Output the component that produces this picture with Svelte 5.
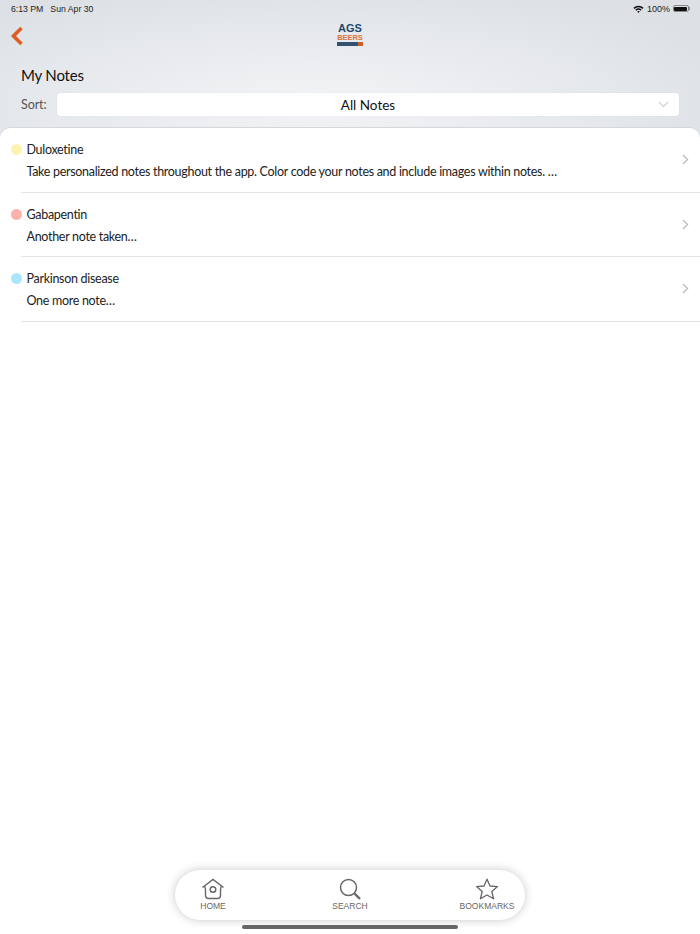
<script>
  const notes = [
    { title: 'Duloxetine', body: 'Take personalized notes throughout the app. Color code your notes and include images within notes. …', color: '#fdf3b0' },
    { title: 'Gabapentin', body: 'Another note taken…', color: '#fdb3ac' },
    { title: 'Parkinson disease', body: 'One more note…', color: '#a9e6fb' }
  ];
</script>

<div class="page">
  <header class="header">
    <div class="status">
      <span><span class="time">6:13 PM</span>Sun Apr 30</span>
      <span class="status-right">
        <svg width="11" height="8" viewBox="0 0 11 8"><path d="M0.4 2.8 A7.4 7.4 0 0 1 10.6 2.8 L9.5 3.9 A5.8 5.8 0 0 0 1.5 3.9 Z M2.3 4.7 A4.7 4.7 0 0 1 8.7 4.7 L7.6 5.8 A3.1 3.1 0 0 0 3.4 5.8 Z M4.2 6.6 A1.9 1.9 0 0 1 6.8 6.6 L5.5 8 Z" fill="#111"/></svg>
        <span>100%</span>
        <span class="battery"><span class="battery-fill"></span></span>
        <span class="battery-nub"></span>
      </span>
    </div>
    <div class="nav">
      <svg class="back" width="14" height="20" viewBox="0 0 14 20"><path d="M11.5 2 L3.5 10 L11.5 18" fill="none" stroke="#dd5f24" stroke-width="3.6"/></svg>
      <div class="logo">
        <span class="logo-ags">AGS</span>
        <span class="logo-beers">BEERS</span>
        <span class="logo-bar"><span class="logo-bar-end"></span></span>
      </div>
    </div>
    <h1>My Notes</h1>
    <div class="sort">
      <span class="sort-label">Sort:</span>
      <div class="select">
        <span>All Notes</span>
        <svg class="caret" width="11" height="7" viewBox="0 0 11 7"><path d="M1 1 L5.5 5.5 L10 1" fill="none" stroke="#cfd2d6" stroke-width="1.3"/></svg>
      </div>
    </div>
  </header>

  <main class="list">
    {#each notes as note}
      <div class="row">
        <div class="row-text">
          <div class="title"><span class="dot" style="background: {note.color}"></span>{note.title}</div>
          <div class="body">{note.body}</div>
        </div>
        <svg class="chevron" width="7" height="11" viewBox="0 0 7 11"><path d="M1 1 L5.5 5.5 L1 10" fill="none" stroke="#bcbcbc" stroke-width="1.4"/></svg>
      </div>
    {/each}
  </main>

  <nav class="tabs">
    <div class="tab">
      <svg width="24" height="22" viewBox="0 0 24 22" fill="none" stroke="#666" stroke-width="1.4"><path d="M1.5 9.5 L12 1.5 L22.5 9.5"/><path d="M3.5 8 Q4.5 10 4.5 12 V17.5 Q4.5 20.5 7.5 20.5 H16.5 Q19.5 20.5 19.5 17.5 V12 Q19.5 10 20.5 8"/><circle cx="12" cy="11.5" r="2.8"/></svg>
      <span>HOME</span>
    </div>
    <div class="tab">
      <svg width="24" height="22" viewBox="0 0 24 22" fill="none" stroke="#666"><circle cx="10.5" cy="9.5" r="8" stroke-width="1.5"/><path d="M16.5 15.5 L22 21" stroke-width="2.4"/></svg>
      <span>SEARCH</span>
    </div>
    <div class="tab">
      <svg width="24" height="22" viewBox="0 0 24 22" fill="none" stroke="#666" stroke-width="1.3"><path d="M12 1.2 L15 8 L22.5 8.6 L16.8 13.5 L18.6 20.8 L12 17 L5.4 20.8 L7.2 13.5 L1.5 8.6 L9 8 Z" stroke-linejoin="round"/></svg>
      <span>BOOKMARKS</span>
    </div>
  </nav>
  <div class="home-indicator"></div>
</div>

<style>
  :global(body) {
    margin: 0;
    background: #fff;
  }

  .page {
    width: 700px;
    height: 934px;
    overflow: hidden;
    position: relative;
    display: flex;
    flex-direction: column;
    font-family: "Lato", "Noto Sans", sans-serif;
    color: #1a1a1a;
    background: #fff;
  }

  .header {
    height: 138px;
    box-sizing: border-box;
    flex: none;
    background: radial-gradient(ellipse 450px 120px at 45% 75%, #f3f4f6 0%, #dde1e6 100%);
  }

  .status {
    display: flex;
    justify-content: space-between;
    align-items: center;
    height: 17px;
    padding: 0 10px 0 11px;
    font-family: "Liberation Sans", sans-serif;
    font-size: 8.7px;
    color: #222;
  }

  .time {
    margin-right: 7px;
  }

  .status-right {
    display: flex;
    align-items: center;
    gap: 2.5px;
    font-size: 9px;
  }

  .battery {
    display: flex;
    width: 16px;
    height: 7px;
    padding: 0.5px;
    border: 0.5px solid #888;
    border-radius: 2px;
    box-sizing: border-box;
  }

  .battery-fill {
    flex: 1;
    background: #111;
    border-radius: 1px;
  }

  .battery-nub {
    width: 1px;
    height: 3px;
    margin-left: -2px;
    background: #888;
  }

  .nav {
    height: 36px;
    display: flex;
    align-items: center;
    position: relative;
    padding-left: 10px;
  }

  .back {
    margin-top: 1px;
  }

  .logo {
    position: absolute;
    left: 337px;
    top: 7px;
    width: 26px;
    display: flex;
    flex-direction: column;
    align-items: center;
    font-family: "Liberation Sans", sans-serif;
  }

  .logo-ags {
    font-size: 11px;
    font-weight: 700;
    color: #1f4a6e;
    line-height: 8px;
  }

  .logo-beers {
    font-size: 7.4px;
    font-weight: 700;
    color: #d8703a;
    line-height: 6px;
    margin-top: 3px;
  }

  .logo-bar {
    display: flex;
    justify-content: flex-end;
    width: 26px;
    height: 4px;
    margin-top: 1px;
    background: #33506c;
  }

  .logo-bar-end {
    width: 5px;
    background: #c9602a;
  }

  h1 {
    margin: 0;
    padding: 11px 0 0 21px;
    font-size: 15px;
    font-weight: 400;
    letter-spacing: -0.2px;
    line-height: 22px;
    color: #111;
  }

  .sort {
    display: flex;
    align-items: center;
    margin-top: 7px;
    padding: 0 21px;
  }

  .sort-label {
    width: 36px;
    font-size: 12.5px;
    letter-spacing: -0.1px;
    color: #555;
  }

  .select {
    flex: 1;
    height: 23px;
    position: relative;
    display: flex;
    align-items: center;
    justify-content: center;
    background: #fff;
    border-radius: 3px;
    font-size: 13.5px;
    color: #111;
    box-shadow: 0 0 1px rgba(0, 0, 0, 0.15);
  }

  .caret {
    position: absolute;
    right: 10px;
    top: 8px;
  }

  .list {
    flex: 1;
    margin-top: -10px;
    background: #fff;
    border-radius: 10px 10px 0 0;
    position: relative;
    box-shadow: 0 -1px 0 #d5d7da;
  }

  .row {
    height: 64.5px;
    box-sizing: border-box;
    margin-left: 21px;
    padding-right: 11px;
    display: flex;
    align-items: center;
    justify-content: space-between;
    border-bottom: 1px solid #e4e4e4;
  }

  .row-text {
    padding-top: 2px;
  }

  .title {
    position: relative;
    padding-left: 5.5px;
    font-size: 12.5px;
    letter-spacing: -0.3px;
    line-height: 18px;
    color: #222;
  }

  .dot {
    position: absolute;
    left: -10px;
    top: 3px;
    width: 11px;
    height: 11px;
    border-radius: 50%;
  }

  .body {
    padding-left: 5.5px;
    margin-top: 4px;
    font-size: 12.5px;
    letter-spacing: -0.3px;
    line-height: 17px;
    color: #222;
  }

  .tabs {
    position: absolute;
    left: 175px;
    top: 870px;
    width: 350px;
    height: 50px;
    display: flex;
    justify-content: space-between;
    background: #fff;
    border-radius: 25px;
    box-shadow: 0 0 10px rgba(0, 0, 0, 0.22);
  }

  .tab {
    width: 76px;
    display: flex;
    flex-direction: column;
    align-items: center;
    padding-top: 8px;
    font-family: "Liberation Sans", sans-serif;
    font-size: 8.5px;
    color: #666;
  }

  .tab span {
    margin-top: 1px;
    line-height: 11px;
  }

  .home-indicator {
    position: absolute;
    left: 242px;
    top: 925px;
    width: 216px;
    height: 4px;
    border-radius: 2px;
    background: #666;
  }
</style>
